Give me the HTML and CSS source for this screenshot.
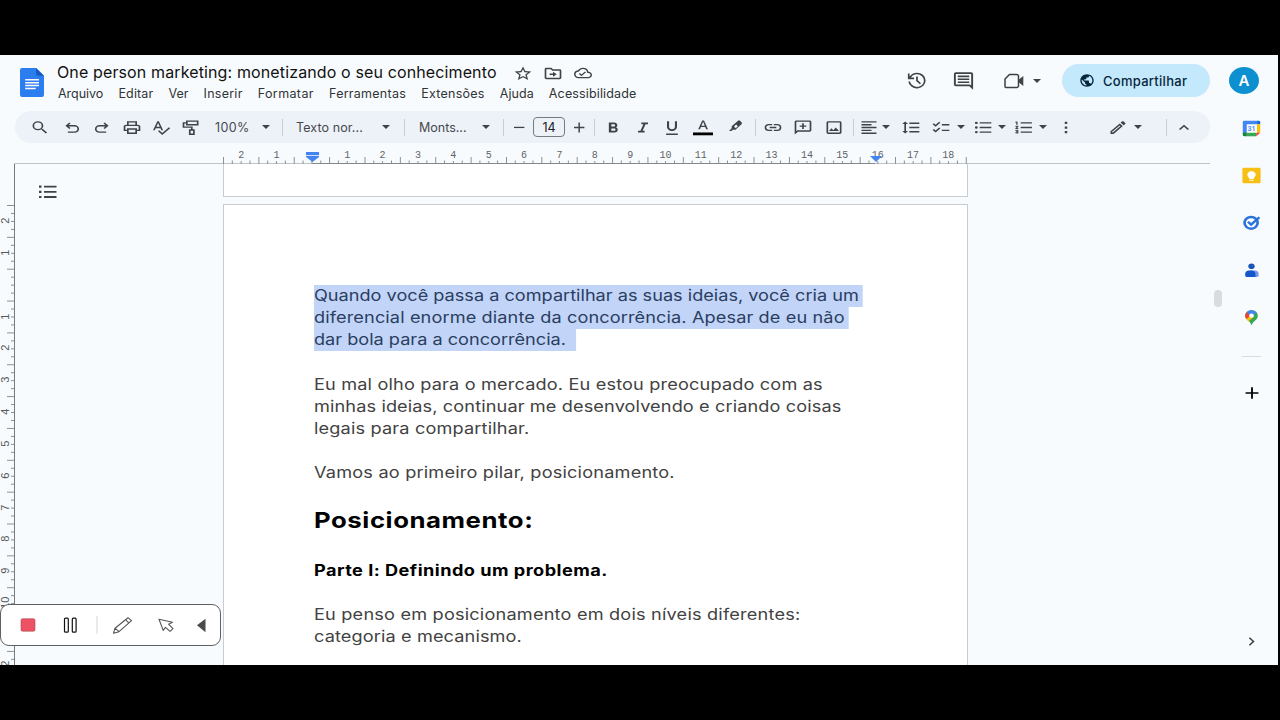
FILE: index.html
```html
<!DOCTYPE html>
<html lang="pt-BR">
<head>
<meta charset="utf-8">
<title>One person marketing: monetizando o seu conhecimento</title>
<link rel="stylesheet" href="styles.css">
</head>
<body>
<div class="app">
  <header class="header">
    <svg class="logo" viewBox="0 0 24 30" preserveAspectRatio="none"><path fill="#2b7df0" d="M2 0h14l8 8v20a2 2 0 0 1-2 2H2a2 2 0 0 1-2-2V2a2 2 0 0 1 2-2z"/><path fill="#1759c4" d="M16 0l8 8h-6a2 2 0 0 1-2-2z"/><path stroke="#fff" stroke-width="1.600" d="M5.200 12.200H19M5.200 15.200H19M5.200 18.200H19M5.200 21.200h10.500"/></svg>
    <div class="titles">
      <div class="title-row">
        <h1 class="title">One person marketing: monetizando o seu conhecimento</h1>
        <svg class="ic" viewBox="0 0 24 24" preserveAspectRatio="none"><path d="M22 9.240l-7.190-.62L12 2 9.190 8.630 2 9.240l5.460 4.730L5.820 21 12 17.270 18.180 21l-1.630-7.030zM12 15.400l-3.760 2.270 1-4.280-3.320-2.880 4.380-.38L12 6.100l1.710 4.040 4.380.38-3.320 2.880 1 4.280z"/></svg>
        <svg class="ic" viewBox="0 0 24 24" preserveAspectRatio="none"><path d="M20 6h-8l-2-2H4a2 2 0 0 0-2 2v12c0 1.100.9 2 2 2h16c1.100 0 2-.9 2-2V8a2 2 0 0 0-2-2zm0 12H4V6h5.200l2 2H20zm-8-4v2.500l4.500-3.500L12 9.500V12H8v2z"/></svg>
        <svg class="ic cloud" viewBox="0 0 24 24" preserveAspectRatio="none"><path d="M19.350 10.040A7.490 7.490 0 0 0 12 4C9.110 4 6.600 5.640 5.350 8.040A5.994 5.994 0 0 0 0 14c0 3.310 2.690 6 6 6h13c2.760 0 5-2.240 5-5 0-2.640-2.050-4.780-4.650-4.960zM19 18H6c-2.210 0-4-1.790-4-4 0-2.050 1.530-3.760 3.560-3.970l1.070-.11.5-.95A5.469 5.469 0 0 1 12 6c2.620 0 4.880 1.860 5.390 4.430l.3 1.500 1.530.11A2.980 2.980 0 0 1 22 15c0 1.650-1.350 3-3 3zm-9-3.820l-2.090-2.090L6.500 13.500 10 17l6.010-6.010-1.410-1.410z"/></svg>
      </div>
      <nav class="menu">
        <span class="m0">Arquivo</span><span class="m2">Editar</span><span>Ver</span><span class="m3">Inserir</span><span class="m4">Formatar</span><span class="m3">Ferramentas</span><span class="m3">Extensões</span><span class="m1">Ajuda</span><span class="m2">Acessibilidade</span>
      </nav>
    </div>
    <div class="actions">
      <svg class="big" viewBox="0 0 24 24" preserveAspectRatio="none"><path d="M12.500 3a9 9 0 0 0-7.700 4.400V4H3v6.500h6.500V8.700H6.100A7.200 7.200 0 1 1 5.300 13H3.450A9.050 9.050 0 1 0 12.500 3zm-.9 4.500v5l3.900 3.900 1.250-1.250-3.350-3.350V7.500z"/></svg>
      <svg class="big" viewBox="0 0 24 24" preserveAspectRatio="none"><path d="M20 2.500H4a2 2 0 0 0-2 2v12a2 2 0 0 0 2 2h14l4 4v-18a2 2 0 0 0-2-2zm0 15.200l-1.200-1.200H4v-12h16zM6 13h12v1.800H6zm0-3.300h12v1.800H6zm0-3.300h12v1.800H6z"/></svg>
      <div class="meet"><svg class="cam" viewBox="0 0 20 16" preserveAspectRatio="none"><path fill="none" stroke="#3c4043" stroke-width="1.500" d="M5.500 1.500h7.200a1.800 1.800 0 0 1 1.800 1.800v9.400a1.800 1.800 0 0 1-1.800 1.800H2a1 1 0 0 1-1-1V6z"/><path d="M15 6.500L19.300 3v10L15 9.500z"/></svg><i class="caret"></i></div>
      <button class="share"><svg viewBox="0 0 24 24" preserveAspectRatio="none"><path d="M12 2C6.480 2 2 6.480 2 12s4.480 10 10 10 10-4.480 10-10S17.520 2 12 2zm-1 17.930c-3.950-.49-7-3.850-7-7.930 0-.62.08-1.210.21-1.790L9 15v1c0 1.100.9 2 2 2zm6.900-2.540c-.26-.81-1-1.390-1.900-1.390h-1v-3c0-.55-.45-1-1-1H8v-2h2c.55 0 1-.45 1-1V7h2c1.100 0 2-.9 2-2v-.41c2.930 1.190 5 4.060 5 7.410 0 2.080-.8 3.970-2.100 5.390z"/></svg><span>Compartilhar</span></button>
      <div class="avatar">A</div>
    </div>
  </header>
  <div class="lower">
    <main class="main">
      <div class="toolbar">
        <svg class="ti" viewBox="0 0 24 24" preserveAspectRatio="none"><path d="M15.500 14h-.79l-.28-.27A6.470 6.470 0 0 0 16 9.500 6.500 6.500 0 1 0 9.500 16c1.610 0 3.090-.59 4.230-1.570l.27.28v.79l5 4.990L20.490 19zm-6 0a4.500 4.500 0 1 1 0-9 4.500 4.500 0 0 1 0 9z"/></svg>
        <svg class="ti" viewBox="0 0 24 24" preserveAspectRatio="none"><path fill="none" stroke="#3f4347" stroke-width="2" d="M9.500 5.500L5.500 9.500l4 4M5.500 9.500H15a4.500 4.500 0 0 1 0 9H7"/></svg>
        <svg class="ti" viewBox="0 0 24 24" preserveAspectRatio="none"><path fill="none" stroke="#3f4347" stroke-width="2" d="M14.500 5.500l4 4-4 4M18.500 9.500H9a4.500 4.500 0 0 0 0 9h8"/></svg>
        <svg class="ti" viewBox="0 0 24 24" preserveAspectRatio="none"><path d="M19 8h-1V3H6v5H5c-1.660 0-3 1.340-3 3v6h4v4h12v-4h4v-6c0-1.660-1.340-3-3-3zM8 5h8v3H8zm8 14H8v-4h8zm2-4v-2H6v2H4v-4c0-.55.45-1 1-1h14c.55 0 1 .45 1 1v4z"/></svg>
        <svg class="ti" viewBox="0 0 24 24" preserveAspectRatio="none"><path d="M12.450 16h2.090L9.430 3H7.570L2.460 16h2.090l1.120-3h5.640zm-6.020-5L8.500 5.480 10.570 11zm15.160.59l-8.090 8.090L9.830 16l-1.410 1.410 5.090 5.090L23 13z"/></svg>
        <svg class="ti" viewBox="0 0 24 24" preserveAspectRatio="none"><path fill="none" stroke="#3f4347" stroke-width="2" d="M7 3h13v5H7zM7 5.500H3v6h10v4M10.500 15.500h5v6h-5z"/></svg>
        <span class="tt zoom">100%</span>
        <i class="caret"></i><i class="sep"></i>
        <span class="tt">Texto nor...</span>
        <i class="caret"></i><i class="sep"></i>
        <span class="tt font">Monts...</span>
        <i class="caret"></i><i class="sep"></i>
        <svg class="ti" viewBox="0 0 24 24" preserveAspectRatio="none"><path d="M6 11h12.500v1.800H6z"/></svg>
        <span class="size">14</span>
        <svg class="ti" viewBox="0 0 24 24" preserveAspectRatio="none"><path d="M18.500 12.900h-5.400V19h-1.800v-6.100H6v-1.800h5.300V5h1.800v6.100h5.400z"/></svg>
        <i class="sep"></i>
        <svg class="ti" viewBox="0 0 24 24" preserveAspectRatio="none"><path d="M15.600 11.790c.97-.67 1.650-1.770 1.650-2.790 0-2.260-1.750-4-4-4H7v14h7.040c2.090 0 3.710-1.700 3.710-3.790 0-1.520-.86-2.820-2.150-3.420zM10 7.500h3c.83 0 1.500.67 1.500 1.500s-.67 1.500-1.500 1.500h-3zm3.500 9H10v-3h3.500c.83 0 1.500.67 1.500 1.500s-.67 1.500-1.500 1.500z"/></svg>
        <svg class="ti" viewBox="0 0 24 24" preserveAspectRatio="none"><path d="M10 5v2.500h2.500l-3.600 9H6V19h8v-2.500h-2.500l3.600-9H18V5z"/></svg>
        <svg class="ti" viewBox="0 0 24 24" preserveAspectRatio="none"><path d="M12 17c3.310 0 6-2.690 6-6V3h-2.500v8a3.500 3.500 0 0 1-7 0V3H6v8c0 3.310 2.690 6 6 6zM5 20.500v2h14v-2z"/></svg>
        <svg class="ti" viewBox="0 0 24 24" preserveAspectRatio="none"><path d="M11 2L6.300 14.500h2.100l1.100-3.100h5.200l1.100 3.100H18L13.200 2zm-.9 7.500l2-5.600 2 5.600z"/><path fill="#000" d="M0 19h24v4H0z"/></svg>
        <svg class="ti marker-pen" viewBox="0 0 20 17"><path d="M12 1.800a1.500 1.500 0 0 1 2 0l1.500 1.500a1.400 1.400 0 0 1 0 2L9.500 10.800H6.800L5.500 12H3l2.700-2.800V7.300zM8 7.500l1.700 1.700 2.200-2-1.800-1.700z" fill-rule="evenodd"/></svg>
        <i class="sep"></i>
        <svg class="ti" viewBox="0 0 24 24" preserveAspectRatio="none"><path d="M3.900 12c0-1.710 1.390-3.100 3.100-3.100h4V7H7a5 5 0 0 0 0 10h4v-1.900H7c-1.710 0-3.100-1.390-3.100-3.100zM8 13h8v-2H8zm9-6h-4v1.900h4a3.100 3.100 0 0 1 0 6.200h-4V17h4a5 5 0 0 0 0-10z"/></svg>
        <svg class="ti" viewBox="0 0 24 24" preserveAspectRatio="none"><path d="M2 22V4c0-1.100.9-2 2-2h16c1.100 0 2 .9 2 2v12c0 1.100-.9 2-2 2H6zM4 4v13.200L5.200 16H20V4zm7 2h2v3h3v2h-3v3h-2v-3H8V9h3z"/></svg>
        <svg class="ti" viewBox="0 0 24 24" preserveAspectRatio="none"><path d="M19 5v14H5V5zm0-2H5a2 2 0 0 0-2 2v14a2 2 0 0 0 2 2h14a2 2 0 0 0 2-2V5a2 2 0 0 0-2-2zm-4.860 8.860l-3 3.870L9 13.140 6 17h12z"/></svg>
        <i class="sep"></i>
        <svg class="ti" viewBox="0 0 24 24" preserveAspectRatio="none"><path d="M15 15H3v2h12zm0-8H3v2h12zM3 13h18v-2H3zm0 8h18v-2H3zM3 3v2h18V3z"/></svg>
        <i class="caret"></i>
        <svg class="ti" viewBox="0 0 24 24" preserveAspectRatio="none"><path d="M6 7h2.500L5 3.500 1.500 7H4v10H1.500L5 20.500 8.500 17H6zm4-2v2h12V5zm0 14h12v-2H10zm0-6h12v-2H10z"/></svg>
        <svg class="ti" viewBox="0 0 24 24" preserveAspectRatio="none"><path d="M22 7h-9v2h9zm0 8h-9v2h9zM5.540 11L2 7.460l1.410-1.410 2.120 2.120 4.240-4.240 1.410 1.410zm0 8L2 15.460l1.410-1.410 2.120 2.120 4.240-4.240 1.410 1.410z"/></svg>
        <i class="caret"></i>
        <svg class="ti" viewBox="0 0 24 24" preserveAspectRatio="none"><path d="M4 10.300a1.700 1.700 0 1 0 0 3.400 1.700 1.700 0 0 0 0-3.400zm0-6.500a1.700 1.700 0 1 0 0 3.400 1.700 1.700 0 0 0 0-3.400zm0 13a1.700 1.700 0 1 0 0 3.400 1.700 1.700 0 0 0 0-3.400zM8 19.500h14v-2H8zM8 13h14v-2H8zm0-8.500v2h14v-2z"/></svg>
        <i class="caret"></i>
        <svg class="ti" viewBox="0 0 24 24" preserveAspectRatio="none"><path d="M2 17h2v.5H3v1h1v.5H2v1h3v-4H2zm1-9h1V4H2v1h1zm-1 3h1.800L2 13.100v.9h3v-1H3.200L5 10.900V10H2z" stroke="#3f4347" stroke-width=".5"/><path d="M8 4.500v2h13.500v-2zm0 15h13.500v-2H8zM8 13h13.500v-2H8z"/></svg>
        <i class="caret"></i>
        <svg class="ti" viewBox="0 0 24 24" preserveAspectRatio="none"><path d="M10.500 4h3v3.200h-3zm0 6.500h3v3.200h-3zm0 6.500h3v3.200h-3z"/></svg>
        <svg class="ti" viewBox="0 0 24 24" preserveAspectRatio="none"><path d="M14.060 9.020l.92.92L5.920 19H5v-.92zM17.660 3c-.25 0-.51.1-.7.290l-1.830 1.830 3.750 3.750 1.830-1.830a1 1 0 0 0 0-1.410l-2.340-2.340c-.2-.2-.45-.29-.71-.29zm-3.600 3.190L3 17.250V21h3.750L17.810 9.940z"/></svg>
        <i class="caret"></i><i class="sep"></i>
        <svg class="ti" viewBox="0 0 24 24" preserveAspectRatio="none"><path d="M12 8l-6 6 1.410 1.410L12 10.830l4.590 4.580L18 14z"/></svg>
      </div>
      <div class="hruler">
        <div class="hlabels"><span>2</span><span>1</span><span></span><span>1</span><span>2</span><span>3</span><span>4</span><span>5</span><span>6</span><span>7</span><span>8</span><span>9</span><span>10</span><span>11</span><span>12</span><span>13</span><span>14</span><span>15</span><span>16</span><span>17</span><span>18</span></div>
        <svg class="hticks" width="745" height="8"><defs><pattern id="ht" width="35.370" height="8" patternUnits="userSpaceOnUse"><path fill="#8b9095" d="M0 1h1v7H0zM8.800 4.500h1V8h-1zM17.600 5h1v3h-1zM26.500 4.500h1V8h-1z"/></pattern></defs><rect width="745" height="8" fill="url(#ht)"/><path fill="#85898e" d="M89 7h563v1H89z"/></svg>
        <svg class="marker left" width="13" height="10"><path fill="#4484f0" d="M0 0h13v3H0zM0 3.800h13v1.200L6.500 10 0 5z"/></svg>
        <svg class="marker right" width="12" height="6"><path fill="#4484f0" d="M0 0h12L6 6z"/></svg>
      </div>
      <div class="workspace">
        <div class="vruler">
          <div class="vlabels"><span>2</span><span>1</span><span></span><span>1</span><span>2</span><span>3</span><span>4</span><span>5</span><span>6</span><span>7</span><span>8</span><span>9</span><span>10</span><span>11</span><span>12</span></div>
          <svg class="vticks" width="8" height="461"><defs><pattern id="vt" width="8" height="31.850" patternUnits="userSpaceOnUse"><path fill="#8b9095" d="M0 0h8v1H0zM4 8h4v1H4zM4 16h4v1H4zM4 24h4v1H4z"/></pattern></defs><rect width="8" height="461" fill="url(#vt)"/></svg>
        </div>
        <div class="outline"><svg class="oi" viewBox="0 0 18 14" preserveAspectRatio="none"><path d="M0 .5h2.500v2.200H0zM5 .7h12.500v1.800H5zM0 5.700h2.500v2.200H0zM5 5.900h12.500v1.800H5zM0 10.900h2.500v2.200H0zM5 11.100h12.500v1.800H5z"/></svg></div>
        <div class="pages">
          <div class="page prev"></div>
          <article class="page current">
            <div class="copy">
              <p class="selected"><span class="line s0">Quando você passa a compartilhar as suas ideias, você cria um</span><span class="line s1">diferencial enorme diante da concorrência. Apesar de eu não</span><span class="line s0 tail">dar bola para a concorrência.</span></p>
              <p><span class="line s2">Eu mal olho para o mercado. Eu estou preocupado com as</span><span class="line s1">minhas ideias, continuar me desenvolvendo e criando coisas</span><span class="line s2">legais para compartilhar.</span></p>
              <p><span class="line s3">Vamos ao primeiro pilar, posicionamento.</span></p>
              <h2>Posicionamento:</h2>
              <h3>Parte I: Definindo um problema.</h3>
              <p><span class="line s3">Eu penso em posicionamento em dois níveis diferentes:</span><span class="line s1">categoria e mecanismo.</span></p>
            </div>
          </article>
        </div>
        <div class="scroll"></div>
      </div>
    </main>
    <aside class="side">
      <svg viewBox="0 0 24 24" preserveAspectRatio="none"><path fill="#fff" d="M3 3h18v18H3z"/><path fill="#4285f4" d="M3 1h16v5H6v13H1V3a2 2 0 0 1 2-2z"/><path fill="#1967d2" d="M19 1h2a2 2 0 0 1 2 2v3h-4z"/><path fill="#fbbc04" d="M19 6h4v12h-4z"/><path fill="#34a853" d="M6 18h12v5H6z"/><path fill="#188038" d="M1 18h5v5H3a2 2 0 0 1-2-2z"/><path fill="#ea4335" d="M18 18h5l-5 5z"/><text x="12" y="15.500" class="cal">31</text></svg>
      <svg viewBox="0 0 24 24" preserveAspectRatio="none"><rect x="0.500" y="1" width="23" height="22" rx="2" fill="#f5bf14"/><path fill="#fff" d="M12 5.500a5.300 5.300 0 0 0-3 9.600V17h6v-1.900a5.300 5.300 0 0 0-3-9.600zM9.500 18h5v1.500h-5z"/></svg>
      <svg viewBox="0 0 24 24" preserveAspectRatio="none"><circle cx="11.500" cy="12.500" r="8.300" fill="none" stroke="#2a73d9" stroke-width="3.400"/><path fill="none" stroke="#2a73d9" stroke-width="3.200" d="M7.500 11l4 4L22 4.500"/></svg>
      <svg viewBox="0 0 24 24" preserveAspectRatio="none"><circle cx="12" cy="6" r="4" fill="#1a56b8"/><path fill="#7a94f0" d="M10 12h6a5 5 0 0 1 5 5v2a2 2 0 0 1-2 2h-9z"/><path fill="#1457c8" d="M8 12h4a5 5 0 0 1 5 5v4H6a2 2 0 0 1-2-2v-2a5 5 0 0 1 4-5z"/></svg>
      <svg viewBox="0 0 24 24" preserveAspectRatio="none"><path fill="#34a853" d="M12 1.500a8 8 0 0 1 8 8c0 6-6 7-8 13.500C10.500 16 4 15.500 4 9.500a8 8 0 0 1 8-8z"/><path fill="#fbbc04" d="M5.300 13.500L12 7l3 4-7 6.500c-1-1-2-2.300-2.700-4z"/><path fill="#ea4335" d="M4 9.500a8 8 0 0 1 2-5.200L11 9l-5.500 5A8 8 0 0 1 4 9.500z"/><path fill="#4285f4" d="M6 4.300a8 8 0 0 1 12.500.7L12 11z"/><circle cx="12" cy="9.500" r="3" fill="#fff"/></svg>
      <hr class="rule">
      <svg class="plus" viewBox="0 0 24 24" preserveAspectRatio="none"><path fill="#000" d="M11 5h2v6h6v2h-6v6h-2v-6H5v-2h6z"/></svg>
      <svg class="next" viewBox="0 0 24 24" preserveAspectRatio="none"><path d="M10 6L8.590 7.410 13.170 12l-4.580 4.590L10 18l6-6z"/></svg>
    </aside>
  </div>
  <div class="recorder">
    <svg width="219" height="40" viewBox="0 0.300 219 40"><rect x="20" y="14" width="14" height="12.500" rx="1.500" fill="#ee5064" stroke="#a94b58" stroke-width=".6"/><g fill="none" stroke="#111" stroke-width="1.200"><rect x="63.500" y="13.500" width="3.800" height="14" rx="1"/><rect x="71.300" y="13.500" width="3.800" height="14" rx="1"/></g><path stroke="#d5d5d5" d="M96 11v18"/><g fill="none" stroke="#555" stroke-width="1.100" stroke-linejoin="round"><path d="M112.500 28.500l1.500-5L127 13l3.500 3L118 27zM114 23.500l4 3.500M124.500 15l3.500 3.500"/><path d="M158 14.500l13.500 3-4 2 4.500 4.500-3 2.700-4.500-4-2.300 3z"/></g><path fill="#4a4a4a" d="M196 20.500l8.500-6.500v13.500z"/></svg>
  </div>
</div>
</body>
</html>
```
FILE: styles.css
```css
* { box-sizing: border-box; }
body { margin: 0; height: 720px; overflow: hidden; background: #000; font-family: Inter, "Liberation Sans", sans-serif; color: #202124; }
svg { display: block; flex: none; fill: #3f4347; }
h1, h2, h3, p { margin: 0; }
.app { position: relative; width: 1278px; height: 610px; margin-top: 55px; overflow: hidden; background: #f8fbfd; display: flex; flex-direction: column; }

/* header */
.header { height: 56px; flex: none; display: flex; padding-left: 20px; }
.logo { width: 24px; height: 29px; margin-top: 13px; }
.titles { margin-left: 13px; width: 700px; padding-top: 6px; }
.title-row { display: flex; align-items: center; height: 23px; }
.title { width: 456px; font-size: 16px; font-weight: 400; line-height: 23px; letter-spacing: .125px; color: #111; white-space: nowrap; }
.ic { width: 20px; height: 17px; margin: 1px 10px 0 0; }
.cloud { width: 18px; margin-left: 1px; height: 16px; }
.menu { display: flex; gap: 15.100px; font-size: 12.500px; line-height: 20px; margin-left: 1px; white-space: nowrap; color: #303336; }
.m0 { letter-spacing: -.02px; }
.m1 { letter-spacing: .05px; }
.m2 { letter-spacing: .14px; }
.m3 { letter-spacing: .26px; }
.m4 { letter-spacing: .38px; }
.actions { display: flex; align-items: center; margin-left: auto; padding-right: 19px; height: 51px; }
.big { width: 23px; height: 21px; margin-right: 24px; }
.meet { display: flex; align-items: center; margin-left: 4px; width: 59px; }
.cam { width: 20px; height: 16px; margin: 1px 8px 0 1px; }
.caret { width: 0; height: 0; border: 4px solid transparent; border-top-color: #3f4347; border-bottom: 0; margin-left: 1px; }
.share { display: flex; align-items: center; gap: 8px; width: 148px; height: 33px; border: 0; border-radius: 17px; padding: 0 0 0 17px; background: #c4e8fc; color: #06263c; font: 500 13px Inter, sans-serif; letter-spacing: .27px; white-space: nowrap; }
.share svg { width: 16px; height: 15px; fill: #06263c; }
.avatar { width: 30px; height: 27px; margin-left: 19px; border-radius: 50%; background: #0d90d0; color: #fff; font-size: 15px; font-weight: 600; line-height: 28px; text-align: center; }

/* toolbar */
.lower { display: flex; flex: 1; min-height: 0; }
.main { width: 1210px; display: flex; flex-direction: column; }
.toolbar { height: 32px; flex: none; margin-left: 15px; padding-left: 15px; border-radius: 16px; background: #edf2f8; display: grid; align-items: center; grid-template-columns: 32px 30px 30px 29px 30px 34px 46px 21px 14px 85px 23px 15px 62px 22px 6px 24px 36px 25px 9px 30px 29px 31px 33px 29px 8px 30px 31px 29px 6px 22px 20px 30px 25px 17px 24px 17px 24px 18px 52px 25px 33px 8px 36px; }
.ti { width: 20px; height: 17px; }
.tt { font-size: 12.500px; letter-spacing: .1px; white-space: nowrap; color: #45494d; }
.zoom { letter-spacing: .35px; }
.font { letter-spacing: 0; }
.sep { width: 1px; height: 17px; background: #c9cdd2; }
.size { width: 32px; height: 20px; border: 1px solid #777b80; border-radius: 4px; font-size: 12.500px; line-height: 19px; text-align: center; }

/* rulers */
.hruler { position: relative; height: 21px; flex: none; margin-left: 14px; border-bottom: 1px solid #c0c4c8; }
.hlabels { display: flex; margin-left: 209.500px; padding-top: 7px; font: 10px/12px "Liberation Mono", monospace; color: #5f6367; }
.hlabels span { width: 35.370px; flex: none; text-align: center; }
.hticks { position: absolute; left: 209px; bottom: -1px; }
.marker { position: absolute; }
.marker.left { left: 292px; top: 9px; }
.marker.right { left: 856px; top: 13px; }
.workspace { display: flex; flex: 1; min-height: 0; }
.vruler { position: relative; width: 15px; border-right: 1px solid #777b80; padding-top: 41px; overflow: hidden; }
.vlabels { width: 10px; font: 11px/10px "Liberation Sans", sans-serif; color: #55595d; }
.vlabels span { display: flex; height: 31.850px; width: 10px; align-items: center; justify-content: center; writing-mode: vertical-rl; transform: rotate(180deg); }
.vticks { position: absolute; left: 7px; top: 41px; }
.outline { width: 208px; padding: 21px 0 0 24px; }
.oi { width: 18px; height: 14px; }

/* document */
.pages { width: 745px; flex: none; display: flex; flex-direction: column; gap: 7px; }
.page { background: #fff; border: 1px solid #c8ccd0; }
.prev { height: 32.500px; border-top: 0; flex: none; }
.current { flex: 1; border-bottom: 0; min-height: 0; overflow: hidden; padding: 80.500px 0 0 89.500px; }
.copy { width: 550px; transform: scaleX(1.17); transform-origin: 0 0; font-size: 15.500px; line-height: 22px; color: #424242; }
.copy p { margin-bottom: 22px; }
.copy .selected { margin-bottom: 22.500px; }
.line { display: table; white-space: nowrap; height: 22px; padding-right: 3px; }
.s0 { letter-spacing: 0; }
.s1 { letter-spacing: .1px; }
.s2 { letter-spacing: .142px; }
.s3 { letter-spacing: .168px; }
.selected .line { background: #c2d4f8; color: #2a3e60; }
.selected .tail { padding-right: 9px; }
.copy h2 { font-size: 22px; font-weight: 700; line-height: 28px; letter-spacing: .48px; color: #000; margin: 0 0 26px; }
.copy h3 { font-size: 15.500px; font-weight: 700; line-height: 22px; letter-spacing: .4px; color: #000; margin-bottom: 22.500px; }
.scroll { width: 8px; height: 17px; margin: 125.500px -12px 0 auto; border-radius: 4px; background: #d9dbde; }

/* side panel */
.side { flex: 1; display: flex; flex-direction: column; align-items: center; padding: 8.500px 0 15px 15.500px; }
.side svg { width: 19px; height: 17px; margin-bottom: 30.400px; }
.cal { font: 600 9px Roboto, sans-serif; text-anchor: middle; fill: #4285f4; }
.side .rule { width: 19px; height: 1px; border: 0; margin: 0 0 26px; background: #d8dadd; }
.side .plus { width: 22px; height: 20px; margin: 0; }
.side .next { margin: auto 0 0; width: 19px; }

/* recording controls float over the page */
.recorder { position: absolute; left: 0; top: 549px; width: 221px; height: 42px; background: #fff; border: 1px solid #606060; border-radius: 9px; }
```
